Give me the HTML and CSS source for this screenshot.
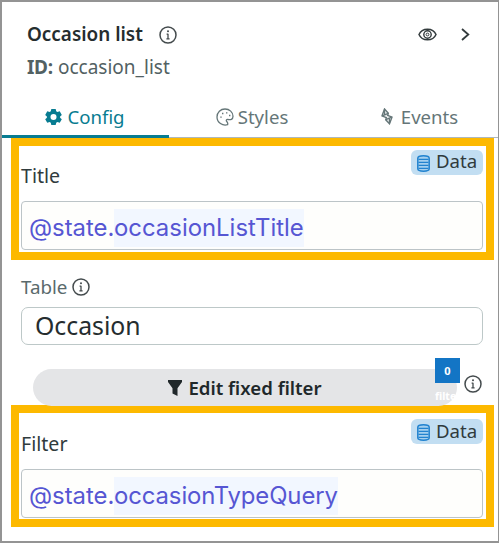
FILE: index.html
```html
<!DOCTYPE html>
<html lang="en">
<head>
<meta charset="utf-8">
<title>Occasion list</title>
<link rel="stylesheet" href="styles.css">
</head>
<body>
<svg class="defs" aria-hidden="true">
  <symbol id="info" viewBox="0 0 18 18"><circle cx="9" cy="9" r="8" fill="none" stroke="currentColor" stroke-width="1.5"/><path d="M9 7.8V13M7.6 8.1H9M7.4 12.9h3.2" fill="none" stroke="currentColor" stroke-width="1.3"/><circle cx="9" cy="5.3" r="1" fill="currentColor"/></symbol>
  <symbol id="database" viewBox="0 0 13 17"><path d="M.8 3.2C.8 0 12.2 0 12.2 3.2v10.6c0 3.2-11.4 3.2-11.4 0z" fill="#a5d0ef" stroke="#2283cf" stroke-width="1.5"/><path d="M1.5 4.3h10M1.5 7.3h10M1.5 10.3h10M1.5 13.3h10" fill="none" stroke="#2283cf" stroke-width="1.2"/></symbol>
</svg>
<main class="panel">
  <header class="header">
    <div class="heading">
      <h1>Occasion list</h1>
      <svg class="info"><use href="#info"/></svg>
      <svg class="eye" viewBox="0 0 19 13"><path d="M1 6.5C4-.6 15-.6 18 6.5 15 13.6 4 13.6 1 6.5z" fill="none" stroke="currentColor" stroke-width="1.5"/><circle cx="9.5" cy="6.5" r="3.7" fill="none" stroke="currentColor" stroke-width="1.4"/><circle cx="9.5" cy="6.5" r="1.4" fill="none" stroke="currentColor"/></svg>
      <svg class="chevron" viewBox="0 0 9 13"><path d="M1 1l6.3 5.5L1 12" fill="none" stroke="currentColor" stroke-width="1.8"/></svg>
    </div>
    <p class="ident"><b>ID:</b> <span>occasion_list</span></p>
  </header>
  <nav class="tabs">
    <a class="tab active"><svg class="gear" viewBox="0 0 18 18"><path fill="currentColor" fill-rule="evenodd" d="M6.7.5h4.6l.6 2.5 1.2.7 2.5-.7 2.2 3.8L16 8.4v1.3l1.8 1.6-2.2 3.8-2.5-.7-1.2.7-.6 2.4H6.7l-.6-2.4-1.2-.7-2.5.7-2.2-3.8L2 9.7V8.4L.2 6.8 2.4 3l2.5.7L6.1 3zM9 5.8a3.2 3.2 0 100 6.4 3.2 3.2 0 000-6.4z"/></svg><span>Config</span></a>
    <a class="tab"><svg class="palette" viewBox="0 0 18 18"><path d="M11.6 16.7C6.7 18.2 1 14.6 1 9c0-4.6 3.6-8 8-8 4.5 0 8 3.2 8 7.3 0 3.4-2.5 3.7-5.1 3.2-1.5-.3-2.1.9-1.1 2.1.8.9 1.4 1.4.8 3.1z" fill="none" stroke="currentColor" stroke-width="1.3"/><path d="M4.3 9.2h1.4M6 5.5h1.4M10 4.8h1.4M13 7.5h1.4" stroke="currentColor" stroke-width="1.3"/></svg><span>Styles</span></a>
    <a class="tab"><svg class="bolt" viewBox="0 0 12 17"><path d="M3.5 1L7.3 5.2 6.7 7.4 11 9.2 8.5 15.8 4.7 11.8 5.3 9.6 1 7.8z" fill="currentColor" fill-opacity=".12" stroke="currentColor" stroke-width="1.4" stroke-dasharray="none"/><path d="M1.2 7.9L7.2 5.3M4.8 11.7L10.8 9.1M3.5 1.5v5.1M8.5 10.1v5" fill="none" stroke="currentColor" stroke-width="1.3"/></svg><span>Events</span></a>
  </nav>
  <section class="callout">
    <div class="field-head"><label class="title-label">Title</label><span class="data"><svg><use href="#database"/></svg><span>Data</span></span></div>
    <div class="binding"><span class="scope">@state.</span><span class="token">occasionListTitle</span></div>
  </section>
  <section class="table-field">
    <div class="table-label"><label>Table</label><svg class="info"><use href="#info"/></svg></div>
    <div class="input"><span>Occasion</span></div>
    <div class="filter-row">
      <button class="filter-button"><svg viewBox="0 0 14 16"><path d="M0 0h14v2L9.5 8.2V16l-5-2.5V8.2L0 2z" fill="currentColor"/></svg><span>Edit fixed filter</span></button>
      <span class="badge"><span class="count">0</span><span class="unit">filte</span></span>
      <svg class="info"><use href="#info"/></svg>
    </div>
  </section>
  <section class="callout filter-callout">
    <div class="field-head"><label class="filter-label">Filter</label><span class="data"><svg><use href="#database"/></svg><span>Data</span></span></div>
    <div class="binding"><span class="scope">@state.</span><span class="token query-token">occasionTypeQuery</span></div>
  </section>
</main>
</body>
</html>
```
FILE: styles.css
```css
* { box-sizing: border-box; }
body { margin: 0; background: #fff; font: 18px/24px "Noto Sans", sans-serif; color: #303b3d; }
.defs { position: absolute; width: 0; height: 0; }
svg { display: block; flex: none; }
.panel { width: 499px; height: 543px; overflow: hidden; border: 2px solid #949494; border-right-width: 1px; }
.header { height: 93px; padding: 19px 28px 0 25px; }
.heading { display: flex; align-items: center; height: 26px; color: #333b3d; }
h1 { margin: 0; width: 117px; font-size: 18.9px; line-height: 24px; font-weight: 600; white-space: nowrap; color: #252d2f; }
.info { width: 18px; height: 18px; color: #444b4d; }
.heading .info { margin-left: 15px; margin-top: 2px; }
.eye { width: 19px; height: 13px; margin-left: auto; }
.chevron { width: 9px; height: 13px; margin-left: 24px; }
.ident { margin: 8px 0 0; font-size: 19px; color: #526163; white-space: nowrap; }
.ident b { display: inline-block; width: 26px; letter-spacing: -.3px; }
.tabs { display: grid; grid-template-columns: 167px 165px 1fr; height: 43px; border-bottom: 1px solid #aeb8bc; }
.tab { display: flex; align-items: center; justify-content: center; height: 43px; gap: 6px; font-size: 18.6px; color: #657678; }
.tab.active { color: #087c91; border-bottom: 3px solid #087c91; padding-top: 3px; padding-right: 1px; gap: 5px; }
.gear { width: 17px; height: 18px; }
.palette { width: 18px; height: 18px; }
.tab:nth-child(2) { gap: 4px; padding-left: 1px; }
.tab:nth-child(3) { gap: 8px; padding-left: 7px; }
.bolt { width: 12px; height: 17px; }
.callout { width: 483px; height: 122px; margin-left: 9px; border: 8px solid #fdb900; padding: 4px 3px 0 2px; }
.filter-callout { padding-top: 5px; }
.field-head { display: flex; justify-content: space-between; align-items: flex-start; height: 51px; }
.field-head label { margin-top: 14px; font-size: 19.6px; }
.data { display: flex; width: 72px; height: 25px; padding: 5px 6px 0; gap: 6px; border-radius: 6px; background: #c2def2; font-size: 18.6px; line-height: 12px; }
.filter-callout .data { margin-top: 1px; line-height: 13px; }
.data svg { width: 13px; height: 17px; }
.binding { display: flex; align-items: center; height: 49px; border: 1px solid #bcc4c7; border-radius: 4px; padding: 4px 7px 0; background: #fefefc; font: 23.9px/38px Inter, sans-serif; color: #5656d3; white-space: nowrap; }
.filter-callout .binding { padding-top: 5px; }
.scope { width: 85px; }
.token { height: 38px; background: #f2f7ff; }
.query-token { letter-spacing: -.1px; }
.table-field { height: 145px; padding: 15px 15px 0 19px; }
.table-label { display: flex; align-items: center; height: 24px; gap: 5px; color: #5a6a6c; font-size: 18.8px; }
.input { display: flex; align-items: center; height: 38px; margin-top: 8px; padding: 0 13px; border: 1.5px solid #bdc8c8; border-radius: 7px; font-size: 24.8px; line-height: 34px; color: #252d2f; }
.input span { margin-top: -2px; }
.filter-row { position: relative; display: flex; align-items: flex-start; justify-content: space-between; height: 37px; margin-top: 24px; padding-left: 12px; }
.filter-button { display: flex; align-items: center; justify-content: center; gap: 6px; width: 424px; height: 37px; border: 0; border-radius: 19px; background: #e4e5e7; color: #20282a; font: 600 18.6px/24px "Noto Sans", sans-serif; padding: 0; }
.filter-button svg { width: 14px; height: 16px; }
.filter-row > .info { margin-top: 6px; margin-right: 1px; }
.badge { position: absolute; left: 414px; top: -11px; width: 25px; color: #fff; font-size: 11px; font-weight: 700; }
.count { display: block; height: 25px; background: #1375c5; text-align: center; line-height: 25px; }
.unit { display: block; line-height: 24px; margin-top: 1px; font-size: 10.5px; }
```
